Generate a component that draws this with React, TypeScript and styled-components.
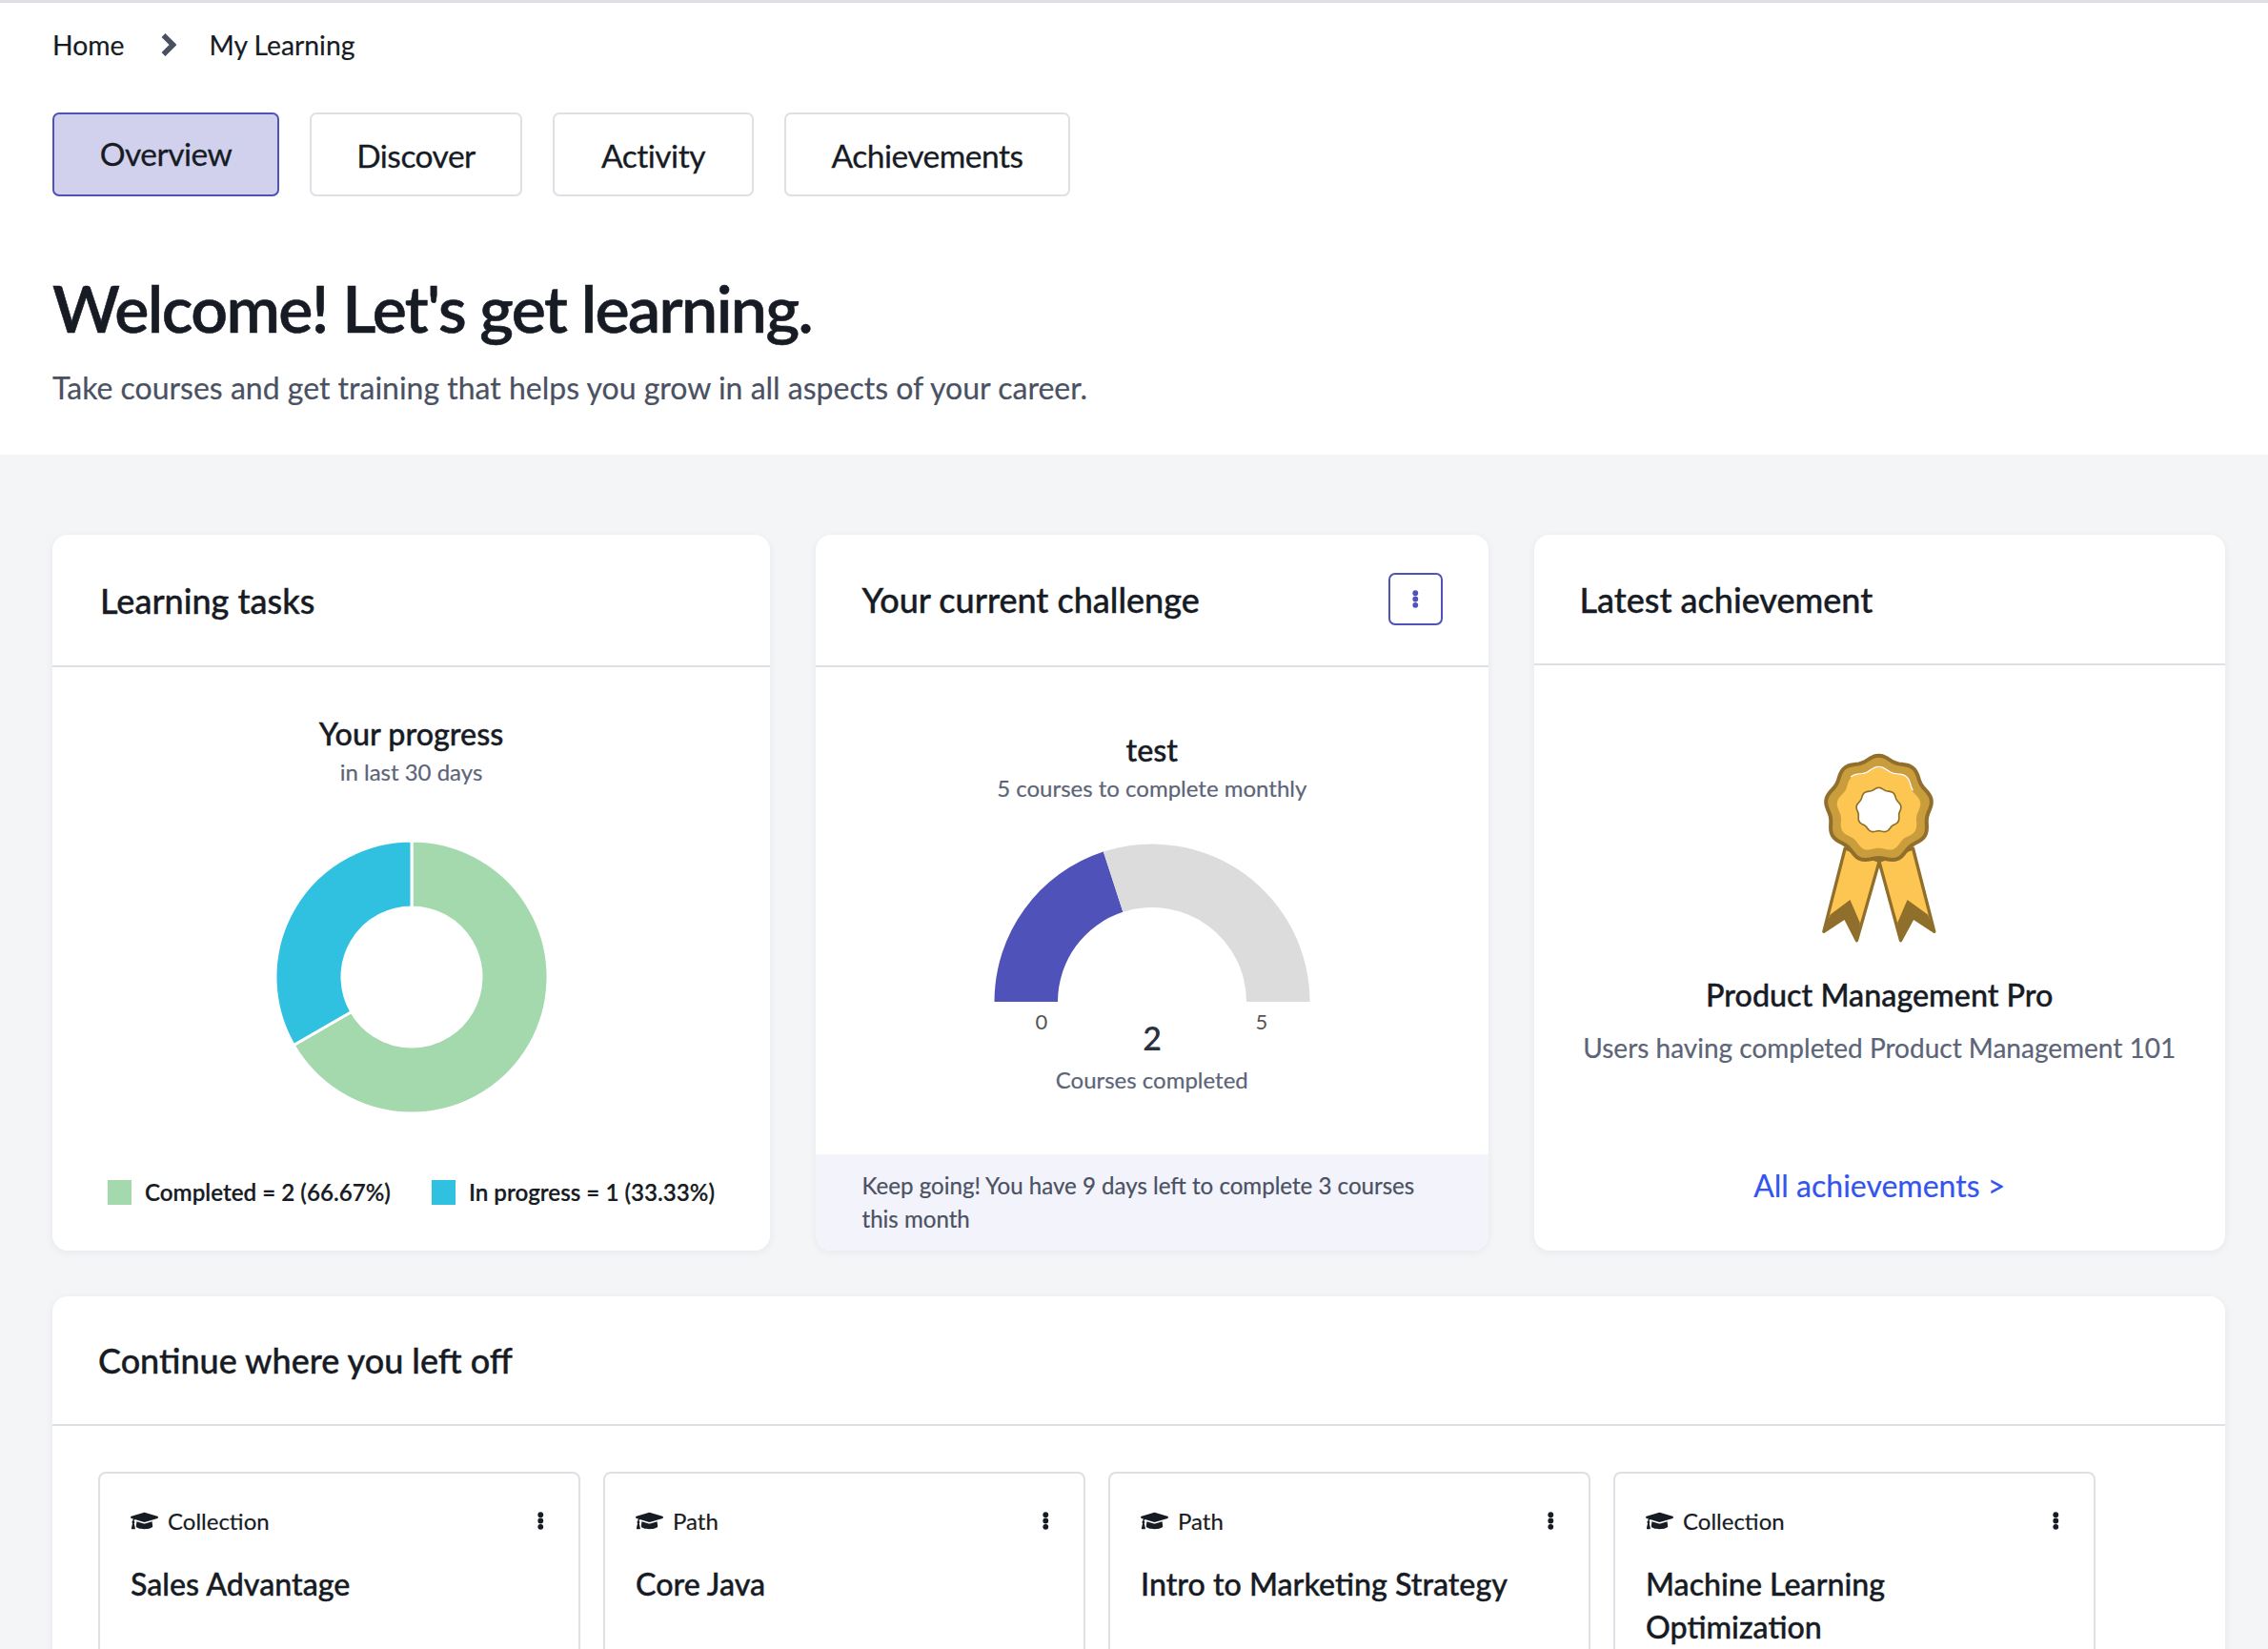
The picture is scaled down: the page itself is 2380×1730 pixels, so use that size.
import React from "react";
import styled, { createGlobalStyle } from "styled-components";
import { FaGraduationCap } from "react-icons/fa";

const Global = createGlobalStyle`
  html, body { margin: 0; padding: 0; background: #f4f5f7; overflow: hidden; height: 1730px; }
  * { box-sizing: border-box; }
  body { font-family: Lato, "Open Sans", sans-serif; color: #171b24; -webkit-text-stroke: 0.2px; }
`;

const Page = styled.div`display:flex;flex-direction:column;width:2380px;height:1730px;overflow:hidden;`;
const Top = styled.header`background:#fff;border-top:3px solid #dfe0e5;height:477px;padding:0 55px;flex:none;`;
const Crumbs = styled.nav`display:flex;align-items:center;height:88px;font-size:28.3px;color:#171b24;`;
const CrumbSep = styled.span`display:flex;margin:0 34px 0 39px;color:#4a5060;`;
const Tabs = styled.div`display:flex;gap:32px;margin-top:27px;`;
const Tab = styled.button<{ $active?: boolean; $w: number }>`
  width:${p => p.$w}px;height:88px;border-radius:7px;font:400 33.5px Lato,sans-serif;color:#171b24;letter-spacing:-.5px;
  -webkit-text-stroke:.3px;
  border:${p => (p.$active ? "2px solid #4f52b8" : "2px solid #dfe0e5")};
  background:${p => (p.$active ? "#d1d1ee" : "#fff")};padding:${p => (p.$active ? "0 0 2px" : "2px 0 0")};
`;
const H1 = styled.h1`margin:76px 0 0;font-size:68px;line-height:82px;font-weight:600;color:#171b24;letter-spacing:-1.6px;-webkit-text-stroke:.6px;`;
const Sub = styled.p`margin:21px 0 0;font-size:32px;line-height:44px;color:#4a5163;`;

const Main = styled.main`padding:84px 45px 0 55px;flex:1;`;
const Grid = styled.div`display:grid;grid-template-columns:753px 706.5px 725.5px;column-gap:47.5px;height:751px;`;
const Card = styled.section`
  background:#fff;border-radius:16px;box-shadow:0 2px 10px rgba(30,35,60,.06);display:flex;flex-direction:column;overflow:hidden;
`;
const CardHead = styled.div<{ $x: number; $h: number; $lift?: number }>`
  display:flex;align-items:center;justify-content:space-between;padding:0 48px ${p => p.$lift ?? 0}px ${p => p.$x}px;height:${p => p.$h}px;flex:none;
  border-bottom:2px solid #dfe0e5;
`;
const CardTitle = styled.h2`margin:0;font-size:36px;font-weight:500;color:#171b24;-webkit-text-stroke:.4px;`;
const MenuBtn = styled.button`
  width:57px;height:55px;border:2px solid #4f52b8;border-radius:7px;background:#fff;color:#4f52b8;display:flex;align-items:center;justify-content:center;padding:0;
`;
const Body = styled.div<{ $top: number }>`flex:1;display:flex;flex-direction:column;align-items:center;padding-top:${p => p.$top}px;`;
const ChartTitle = styled.div`font-size:32.3px;line-height:40px;font-weight:500;color:#171b24;-webkit-text-stroke:.4px;`;
const ChartSub = styled.div`font-size:24px;line-height:32px;margin-top:4px;color:#5c6478;`;
const Donut = styled.svg`display:block;margin-top:55px;`;
const Legend = styled.div`display:flex;gap:43px;margin-top:66px;font-size:24.2px;font-weight:600;color:#171b24;`;
const LegendItem = styled.div`display:flex;align-items:center;gap:14px;line-height:32px;`;
const Swatch = styled.i<{ $c: string }>`width:25px;height:26px;background:${p => p.$c};display:block;`;
const Gauge = styled.svg`display:block;margin-top:40px;`;
const GaugeCaption = styled.div`font-size:24px;line-height:32px;color:#5c6478;margin-top:4px;`;
const Banner = styled.div`flex:none;height:101px;background:#f2f3fb;padding:16px 60px 0 49px;font-size:24.1px;line-height:34.5px;color:#4a5163;`;
const Medal = styled.svg`display:block;`;
const AchTitle = styled.div`font-size:32.3px;line-height:40px;font-weight:500;margin-top:34px;color:#171b24;-webkit-text-stroke:.4px;`;
const AchSub = styled.div`font-size:28px;line-height:40px;margin-top:15px;color:#5c6478;`;
const AchLink = styled.a`font-size:32px;line-height:40px;color:#3355ee;margin-top:auto;margin-bottom:48px;`;

const Wide = styled(Card)`margin-top:48px;height:560px;`;
const Courses = styled.div`display:grid;grid-template-columns:repeat(4,506px);column-gap:24px;padding:48px 0 0 48px;`;
const Course = styled.article`height:400px;border:2px solid #dfe0e5;border-radius:8px;padding:29px 36px 0 32px;`;
const CourseTop = styled.div`display:flex;align-items:center;justify-content:space-between;height:40px;`;
const CourseType = styled.span`display:flex;align-items:center;gap:10px;font-size:24px;color:#171b24;`;
const CourseName = styled.h3`margin:24px 0 0;font-size:32.2px;line-height:45px;font-weight:500;color:#171b24;-webkit-text-stroke:.4px;`;
const Dots = styled.svg`display:block;`;

const pol = (cx: number, cy: number, r: number, deg: number) => {
  const a = ((deg - 90) * Math.PI) / 180;
  return [cx + r * Math.cos(a), cy + r * Math.sin(a)];
};
const ring = (cx: number, cy: number, R: number, r: number, a0: number, a1: number) => {
  const [x0, y0] = pol(cx, cy, R, a0), [x1, y1] = pol(cx, cy, R, a1);
  const [x2, y2] = pol(cx, cy, r, a1), [x3, y3] = pol(cx, cy, r, a0);
  const large = a1 - a0 > 180 ? 1 : 0;
  return `M${x0} ${y0}A${R} ${R} 0 ${large} 1 ${x1} ${y1}L${x2} ${y2}A${r} ${r} 0 ${large} 0 ${x3} ${y3}Z`;
};
const wavy = (cx: number, cy: number, R: number, amp: number, n = 9, from = 0, to = 360) => {
  const pts: string[] = [];
  for (let d = from; d <= to; d += 3) {
    const r = R + amp * Math.cos((n * d * Math.PI) / 180);
    const [x, y] = pol(cx, cy, r, d);
    pts.push(`${x.toFixed(1)} ${y.toFixed(1)}`);
  }
  return "M" + pts.join("L");
};

const DotsIcon = ({ c = "#171b24", h = 20 }: { c?: string; h?: number }) => (
  <Dots width={h / 2.9} height={h} viewBox="0 0 7 20"><circle cx="3.5" cy="3.2" r="3.1" fill={c} /><circle cx="3.5" cy="10" r="3.1" fill={c} /><circle cx="3.5" cy="16.8" r="3.1" fill={c} /></Dots>
);

const MedalIcon = () => (
  <Medal width="122" height="200" viewBox="395 150 365 600">
    <path d="M470 450L403 712L470 668L507 740L578 490Z" fill="#fdc652" stroke="#8f6f2b" strokeWidth="10" strokeLinejoin="round" />
    <path d="M684 450L751 712L684 668L645 740L577 490Z" fill="#fdc652" stroke="#8f6f2b" strokeWidth="10" strokeLinejoin="round" />
    <path d="M425 660L485 615L515 685L507 740L470 668L403 712Z" fill="#8f6f2b" stroke="#8f6f2b" strokeWidth="4" strokeLinejoin="round" />
    <path d="M729 660L667 615L637 685L645 740L684 668L751 712Z" fill="#8f6f2b" stroke="#8f6f2b" strokeWidth="4" strokeLinejoin="round" />
    <path d={wavy(576, 326, 161, 7) + "Z"} fill="#c99c3c" stroke="#8f6f2b" strokeWidth="12" strokeLinejoin="round" />
    <path d={wavy(576, 328, 127, 6) + "Z"} fill="#fdc652" />
    <path d={wavy(576, 328, 129, 6, 9, 320, 360)} fill="none" stroke="#fff" strokeWidth="4" strokeLinecap="round" />
    <path d={wavy(576, 328, 129, 6, 9, 0, 60)} fill="none" stroke="#fff" strokeWidth="4" strokeLinecap="round" />
    <path d={wavy(576, 330, 68, 3) + "Z"} fill="#fff" stroke="#8f6f2b" strokeWidth="5" />
  </Medal>
);

const courses = [
  { t: "Collection", n: "Sales Advantage" },
  { t: "Path", n: "Core Java" },
  { t: "Path", n: "Intro to Marketing Strategy" },
  { t: "Collection", n: "Machine Learning Optimization" },
];

export default function App() {
  return (
    <Page>
      <Global />
      <Top>
        <Crumbs>
          <span>Home</span>
          <CrumbSep>
            <svg width="16" height="26" viewBox="0 0 16 26"><path d="M2.5 3l10 10-10 10" fill="none" stroke="currentColor" strokeWidth="5.5" /></svg>
          </CrumbSep>
          <span>My Learning</span>
        </Crumbs>
        <Tabs>
          <Tab $active $w={238}>Overview</Tab>
          <Tab $w={223}>Discover</Tab>
          <Tab $w={211}>Activity</Tab>
          <Tab $w={300}>Achievements</Tab>
        </Tabs>
        <H1>Welcome! Let's get learning.</H1>
        <Sub>Take courses and get training that helps you grow in all aspects of your career.</Sub>
      </Top>
      <Main>
        <Grid>
          <Card>
            <CardHead $x={50} $h={139}><CardTitle>Learning tasks</CardTitle></CardHead>
            <Body $top={50}>
              <ChartTitle>Your progress</ChartTitle>
              <ChartSub>in last 30 days</ChartSub>
              <Donut width="288" height="288" viewBox="0 0 288 288">
                <path d={ring(144, 144, 143, 73, 0, 240)} fill="#a3d9ad" stroke="#fff" strokeWidth="3" />
                <path d={ring(144, 144, 143, 73, 240, 360)} fill="#30c1e0" stroke="#fff" strokeWidth="3" />
              </Donut>
              <Legend>
                <LegendItem><Swatch $c="#a3d9ad" />Completed = 2 (66.67%)</LegendItem>
                <LegendItem><Swatch $c="#30c1e0" />In progress = 1 (33.33%)</LegendItem>
              </Legend>
            </Body>
          </Card>
          <Card>
            <CardHead $x={49} $h={139} $lift={2}>
              <CardTitle>Your current challenge</CardTitle>
              <MenuBtn aria-label="menu"><DotsIcon c="#4f52b8" h={19} /></MenuBtn>
            </CardHead>
            <Body $top={67}>
              <ChartTitle>test</ChartTitle>
              <ChartSub>5 courses to complete monthly</ChartSub>
              <Gauge width="340" height="230" viewBox="0 0 340 230">
                <path d={ring(170, 168, 165.5, 99, -90, -18)} fill="#4f52b8" />
                <path d={ring(170, 168, 165.5, 99, -18, 90)} fill="#dcdcdc" />
                <text x="54" y="197" fontSize="22" fill="#555" textAnchor="middle" fontFamily="Lato">0</text>
                <text x="285" y="197" fontSize="22" fill="#555" textAnchor="middle" fontFamily="Lato">5</text>
                <text x="170" y="219" fontSize="34" fontWeight="600" fill="#2a3040" textAnchor="middle" fontFamily="Lato">2</text>
              </Gauge>
              <GaugeCaption>Courses completed</GaugeCaption>
            </Body>
            <Banner>Keep going! You have 9 days left to complete 3 courses this month</Banner>
          </Card>
          <Card>
            <CardHead $x={48} $h={137}><CardTitle>Latest achievement</CardTitle></CardHead>
            <Body $top={92}>
              <MedalIcon />
              <AchTitle>Product Management Pro</AchTitle>
              <AchSub>Users having completed Product Management 101</AchSub>
              <AchLink>All achievements &gt;</AchLink>
            </Body>
          </Card>
        </Grid>
        <Wide>
          <CardHead $x={48} $h={136}><CardTitle>Continue where you left off</CardTitle></CardHead>
          <Courses>
            {courses.map(c => (
              <Course key={c.n}>
                <CourseTop>
                  <CourseType><FaGraduationCap size={29} />{c.t}</CourseType>
                  <DotsIcon h={19} />
                </CourseTop>
                <CourseName>{c.n}</CourseName>
              </Course>
            ))}
          </Courses>
        </Wide>
      </Main>
    </Page>
  );
}
